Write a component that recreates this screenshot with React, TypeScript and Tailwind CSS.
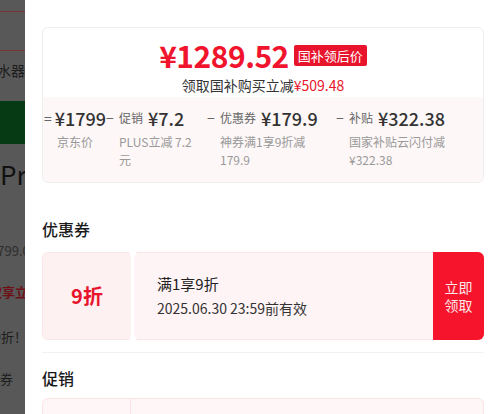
import React from "react";

const font = { fontFamily: '"Noto Sans CJK SC", "Noto Sans", sans-serif' };

function Backdrop() {
  // dimmed product page peeking out behind the sheet
  return (
    <div className="w-[25px] shrink-0 h-full overflow-hidden bg-[#585858] flex flex-col">
      <div className="h-[11px]" />
      <div className="h-px bg-[#7a3434]" />
      <div className="h-[38px]" />
      <div className="h-px bg-[#7a3434]" />
      <div className="h-[38px] flex items-center justify-end whitespace-nowrap text-[14px] text-[#1c1c1c]">
        净水器
      </div>
      <div className="h-[12px]" />
      <div className="h-[43px] bg-[#063a15]" />
      <div className="h-[15px]" />
      <div className="h-[30px] flex items-center whitespace-nowrap text-[26px] text-[#111] leading-none">
        Pro
      </div>
      <div className="h-[52px]" />
      <div className="h-[20px] flex items-center justify-end whitespace-nowrap text-[13px] text-[#2e2e2e] -mr-[12px]">
        ¥1799.00
      </div>
      <div className="h-[21px]" />
      <div className="h-[20px] flex items-center justify-end whitespace-nowrap text-[13px] font-bold text-[#6e0f16] -mr-[16px]">
        领取享立减
      </div>
      <div className="h-[25px]" />
      <div className="h-[20px] flex items-center justify-end whitespace-nowrap text-[13px] text-[#1c1c1c] -mr-[2px]">
        9折！
      </div>
      <div className="h-[22px]" />
      <div className="h-[20px] flex items-center justify-end whitespace-nowrap text-[13px] text-[#1c1c1c] mr-[12px]">
        优惠券
      </div>
    </div>
  );
}

function Part({
  op,
  label,
  value,
  desc,
  w,
  dw,
}: {
  op: string;
  label?: string;
  value: string;
  desc: string;
  w: string;
  dw: string;
}) {
  return (
    <div className={`${w} shrink-0`}>
      <div className="flex items-center h-[24px] whitespace-nowrap">
        <span className="w-[13px] text-[14px] text-[#666]">{op}</span>
        {label && <span className="text-[12px] text-[#666] mr-[5px]">{label}</span>}
        <span className="text-[18px] font-medium text-[#333] leading-none">{value}</span>
      </div>
      <div className={`${dw} ml-[13px] mt-[3px] text-[12px] leading-[18px] text-[#999]`}>{desc}</div>
    </div>
  );
}

function PriceCard() {
  return (
    <div className="border border-[#eeeeee] rounded-[6px] overflow-hidden">
      <div className="h-[69px] flex flex-col items-center pt-[12px]">
        <div className="flex items-center h-[30px]">
          <span className="text-[30px] font-bold text-[#f0142d] leading-none tracking-[-0.5px]">¥1289.52</span>
          <span className="ml-[5px] bg-[#e8142c] text-white text-[13px] leading-none px-[4px] py-[4px] rounded-[2px]">
            国补领后价
          </span>
        </div>
        <div className="mt-[6px] text-[14px] leading-[18px] text-[#333]">
          领取国补购买立减<span className="text-[#e8142c]">¥509.48</span>
        </div>
      </div>
      <div className="bg-[#fdf7f7] flex pl-[1px] pt-[9px] pb-[13px]">
        <Part op="=" value="¥1799" desc="京东价" w="w-[62px]" dw="w-[48px]" />
        <Part op="−" label="促销" value="¥7.2" desc="PLUS立减 7.2 元" w="w-[101px]" dw="w-[86px]" />
        <Part op="−" label="优惠券" value="¥179.9" desc="神券满1享9折减 179.9" w="w-[129px]" dw="w-[92px]" />
        <Part op="−" label="补贴" value="¥322.38" desc="国家补贴云闪付减 ¥322.38" w="flex-1" dw="w-[100px]" />
      </div>
    </div>
  );
}

function Coupon() {
  return (
    <div className="flex h-[88px]">
      <div className="w-[89px] bg-[#fef1f2] border border-r-0 border-[#fbe7e9] rounded-l-[6px] flex items-center justify-center">
        <span className="text-[20px] font-bold text-[#e8142c]">9折</span>
      </div>
      <div className="relative w-[3px] bg-white">
        <div className="absolute -top-[3px] left-1/2 -translate-x-1/2 w-[7px] h-[7px] rounded-full bg-white" />
        <div className="absolute -bottom-[3px] left-1/2 -translate-x-1/2 w-[7px] h-[7px] rounded-full bg-white" />
      </div>
      <div className="flex-1 bg-[#fef4f5] border border-x-0 border-[#fbe7e9] flex flex-col justify-center pl-[23px]">
        <div className="text-[15px] leading-[20px] text-[#222]">满1享9折</div>
        <div className="mt-[4px] text-[14px] leading-[20px] text-[#333]">2025.06.30 23:59前有效</div>
      </div>
      <div className="w-[51px] bg-[#f5142c] rounded-r-[6px] flex items-center justify-center text-center text-[14px] leading-[18px] text-[#fde8ea]">
        <span>
          立即
          <br />
          领取
        </span>
      </div>
    </div>
  );
}

export default function App() {
  return (
    <div className="w-[500px] h-[414px] overflow-hidden flex bg-white" style={font}>
      <Backdrop />
      <div className="flex-1 bg-white flex flex-col">
        <div className="pt-[27px] pl-[17px] pr-[16px]">
          <PriceCard />
        </div>
        <div className="mt-[12px] h-[10px] bg-[#f6f7f9]" />
        <div className="pl-[17px] pr-[16px]">
          <div className="mt-[24px] text-[16px] leading-[20px] font-medium text-[#1a1a1a]">优惠券</div>
          <div className="mt-[13px]">
            <Coupon />
          </div>
          <div className="mt-[12px] h-px bg-[#f2f2f2]" />
          <div className="mt-[15px] text-[16px] leading-[20px] font-medium text-[#1a1a1a]">促销</div>
          <div className="mt-[10px] h-[60px] flex border border-[#fbe3e6] rounded-[6px] bg-[#fff6f7]">
            <div className="w-[88px] border-r border-[#fbe3e6]" />
          </div>
        </div>
      </div>
    </div>
  );
}
